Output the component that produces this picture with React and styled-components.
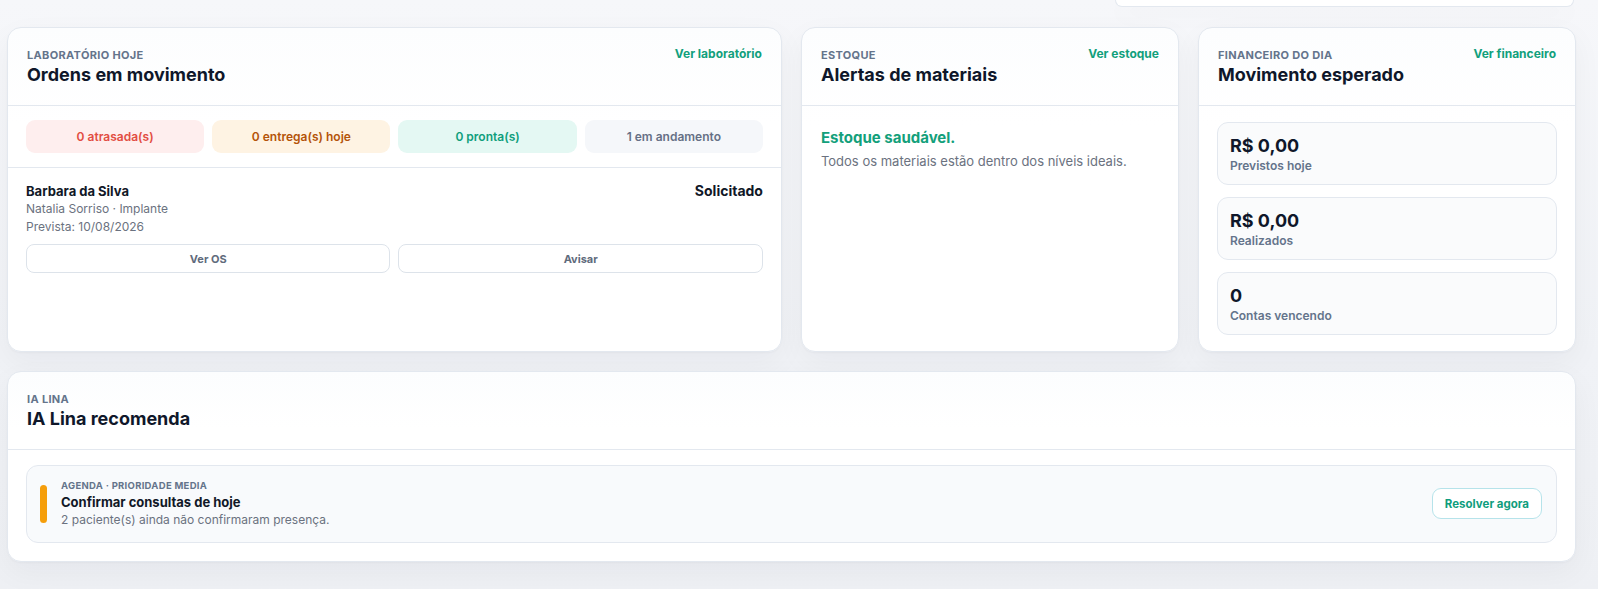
import React from 'react';
import styled, { createGlobalStyle } from 'styled-components';

const GlobalStyle = createGlobalStyle`
    * {
        box-sizing: border-box;
    }
    body {
        margin: 0;
        background: linear-gradient(180deg, #f6f7fa 0%, #f0f2f6 60%, #eef0f4 100%);
        font-family: Inter, "Noto Sans", "Liberation Sans", sans-serif;
        color: #0f172a;
        -webkit-font-smoothing: antialiased;
    }
`

const Page = styled.div`
    display: flex;
    flex-direction: column;
    gap: 19px;
    padding: 0 22px 28px 7px;
    min-height: 100vh;
`

const TopStrip = styled.div`
    display: flex;
    justify-content: flex-end;
    margin-bottom: 1px;
`

const PartialCard = styled.div`
    width: 459px;
    height: 7px;
    margin-right: 2px;
    background: #fff;
    border: 1px solid #e3e8ef;
    border-top: none;
    border-radius: 0 0 14px 14px;
    box-shadow: 0 8px 24px rgba(15, 23, 42, 0.04);
`

const Grid = styled.div`
    display: grid;
    grid-template-columns: minmax(0, 2.05fr) minmax(0, 1fr) minmax(0, 1fr);
    gap: 19px;
`

const Card = styled.section`
    display: flex;
    flex-direction: column;
    background: linear-gradient(180deg, #fcfdfe 0%, #ffffff 30%);
    border: 1px solid #e3e8ef;
    border-radius: 14px;
    box-shadow: 0 10px 30px rgba(15, 23, 42, 0.045), 0 1px 2px rgba(15, 23, 42, 0.03);
    overflow: hidden;
`

const CardHeader = styled.header`
    display: flex;
    justify-content: space-between;
    align-items: flex-start;
    padding: 19px 19px 18px;
    border-bottom: 1px solid #e3e8ef;
`

const Eyebrow = styled.div`
    font-size: 11px;
    line-height: 16px;
    font-weight: 700;
    letter-spacing: 0.03em;
    text-transform: uppercase;
    color: #64748b;
`

const Title = styled.h2`
    margin: 0;
    font-size: 18px;
    line-height: 24px;
    font-weight: 700;
    color: #0f172a;
`

const HeaderLink = styled.a`
    font-size: 12px;
    line-height: 14px;
    font-weight: 700;
    color: #11a07c;
    text-decoration: none;
    cursor: pointer;
`

const tones = {
    danger: { bg: '#feeeee', fg: '#e24d42' },
    warning: { bg: '#fef3e3', fg: '#b45309' },
    success: { bg: '#e4f8f3', fg: '#0f9f7c' },
    neutral: { bg: '#f5f7fa', fg: '#667085' }
};

const PillRow = styled.div`
    display: grid;
    grid-template-columns: repeat(4, minmax(0, 1fr));
    gap: 8px;
    padding: 14px 18px;
    border-bottom: 1px solid #e3e8ef;
`

const Pill = styled.div`
    height: 33px;
    display: flex;
    align-items: center;
    justify-content: center;
    border-radius: 9px;
    font-size: 12px;
    font-weight: 600;
    background: ${p => tones[p.tone].bg};
    color: ${p => tones[p.tone].fg};
`

const OrderItem = styled.div`
    padding: 14px 18px 13px;
`

const OrderTop = styled.div`
    display: flex;
    justify-content: space-between;
    align-items: flex-start;
`

const OrderName = styled.div`
    font-size: 13px;
    line-height: 18px;
    font-weight: 700;
    color: #111827;
`

const OrderMeta = styled.div`
    font-size: 12px;
    line-height: 18px;
    color: #6b7280;
`

const Status = styled.div`
    font-size: 14px;
    line-height: 18px;
    font-weight: 700;
    color: #111827;
`

const ActionRow = styled.div`
    display: grid;
    grid-template-columns: 1fr 1fr;
    gap: 8px;
    margin-top: 8px;
`

const GhostButton = styled.button`
    height: 29px;
    background: #fff;
    border: 1px solid #dde3ea;
    border-radius: 8px;
    font-family: inherit;
    font-size: 11px;
    font-weight: 700;
    color: #5f6b7c;
    cursor: pointer;
`

const StockBody = styled.div`
    padding: 22px 19px;
`

const StockTitle = styled.div`
    font-size: 15px;
    line-height: 20px;
    font-weight: 700;
    color: #13a07b;
`

const StockText = styled.div`
    margin-top: 4px;
    font-size: 13px;
    line-height: 18px;
    color: #6b7280;
`

const FinanceBody = styled.div`
    display: flex;
    flex-direction: column;
    gap: 12px;
    padding: 16px 18px;
`

const StatBox = styled.div`
    padding: 11px 12px 10px;
    background: #fafbfc;
    border: 1px solid #e3e8ef;
    border-radius: 11px;
`

const StatValue = styled.div`
    font-size: 18px;
    line-height: 24px;
    font-weight: 700;
    color: #0f172a;
`

const StatLabel = styled.div`
    font-size: 12px;
    line-height: 16px;
    font-weight: 600;
    color: #64748b;
`

const RecBody = styled.div`
    padding: 15px 18px 18px;
`

const RecItem = styled.div`
    display: flex;
    align-items: center;
    gap: 14px;
    padding: 13px 14px 14px 13px;
    background: #f8fafc;
    border: 1px solid #e3e8ef;
    border-radius: 12px;
`

const PriorityBar = styled.span`
    flex: none;
    width: 7px;
    height: 38px;
    border-radius: 4px;
    background: ${p => p.color};
`

const RecText = styled.div`
    flex: 1;
    min-width: 0;
`

const RecEyebrow = styled.div`
    font-size: 9.5px;
    line-height: 14px;
    font-weight: 700;
    letter-spacing: 0.03em;
    text-transform: uppercase;
    color: #64748b;
`

const RecTitle = styled.div`
    font-size: 13px;
    line-height: 18px;
    font-weight: 700;
    color: #111827;
`

const RecDesc = styled.div`
    font-size: 12px;
    line-height: 17px;
    color: #6b7280;
`

const ResolveButton = styled.button`
    flex: none;
    height: 31px;
    padding: 0 12px;
    background: #fff;
    border: 1px solid #b6e3ea;
    border-radius: 9px;
    font-family: inherit;
    font-size: 11.5px;
    font-weight: 700;
    color: #0f9d7d;
    cursor: pointer;
`

const labStats = [
    { tone: 'danger', label: '0 atrasada(s)' },
    { tone: 'warning', label: '0 entrega(s) hoje' },
    { tone: 'success', label: '0 pronta(s)' },
    { tone: 'neutral', label: '1 em andamento' }
];

const finance = [
    { value: 'R$ 0,00', label: 'Previstos hoje' },
    { value: 'R$ 0,00', label: 'Realizados' },
    { value: '0', label: 'Contas vencendo' }
];

const Header = ({ eyebrow, title, link }) => (
    <CardHeader>
        <div>
            <Eyebrow>{eyebrow}</Eyebrow>
            <Title>{title}</Title>
        </div>
        {link && <HeaderLink>{link}</HeaderLink>}
    </CardHeader>
);

const App = () => {
    return (
        <>
            <GlobalStyle />
            <Page>
                <TopStrip>
                    <PartialCard />
                </TopStrip>
                <Grid>
                    <Card>
                        <Header
                            eyebrow="Laboratório hoje"
                            title="Ordens em movimento"
                            link="Ver laboratório"
                        />
                        <PillRow>
                            {labStats.map(s => (
                                <Pill key={s.label} tone={s.tone}>{s.label}</Pill>
                            ))}
                        </PillRow>
                        <OrderItem>
                            <OrderTop>
                                <div>
                                    <OrderName>Barbara da Silva</OrderName>
                                    <OrderMeta>Natalia Sorriso · Implante</OrderMeta>
                                    <OrderMeta>Prevista: 10/08/2026</OrderMeta>
                                </div>
                                <Status>Solicitado</Status>
                            </OrderTop>
                            <ActionRow>
                                <GhostButton>Ver OS</GhostButton>
                                <GhostButton>Avisar</GhostButton>
                            </ActionRow>
                        </OrderItem>
                    </Card>

                    <Card>
                        <Header
                            eyebrow="Estoque"
                            title="Alertas de materiais"
                            link="Ver estoque"
                        />
                        <StockBody>
                            <StockTitle>Estoque saudável.</StockTitle>
                            <StockText>Todos os materiais estão dentro dos níveis ideais.</StockText>
                        </StockBody>
                    </Card>

                    <Card>
                        <Header
                            eyebrow="Financeiro do dia"
                            title="Movimento esperado"
                            link="Ver financeiro"
                        />
                        <FinanceBody>
                            {finance.map(f => (
                                <StatBox key={f.label}>
                                    <StatValue>{f.value}</StatValue>
                                    <StatLabel>{f.label}</StatLabel>
                                </StatBox>
                            ))}
                        </FinanceBody>
                    </Card>
                </Grid>

                <Card>
                    <Header eyebrow="IA Lina" title="IA Lina recomenda" />
                    <RecBody>
                        <RecItem>
                            <PriorityBar color="#f59e0b" />
                            <RecText>
                                <RecEyebrow>Agenda · Prioridade media</RecEyebrow>
                                <RecTitle>Confirmar consultas de hoje</RecTitle>
                                <RecDesc>2 paciente(s) ainda não confirmaram presença.</RecDesc>
                            </RecText>
                            <ResolveButton>Resolver agora</ResolveButton>
                        </RecItem>
                    </RecBody>
                </Card>
            </Page>
        </>
    );
};

export default App;
